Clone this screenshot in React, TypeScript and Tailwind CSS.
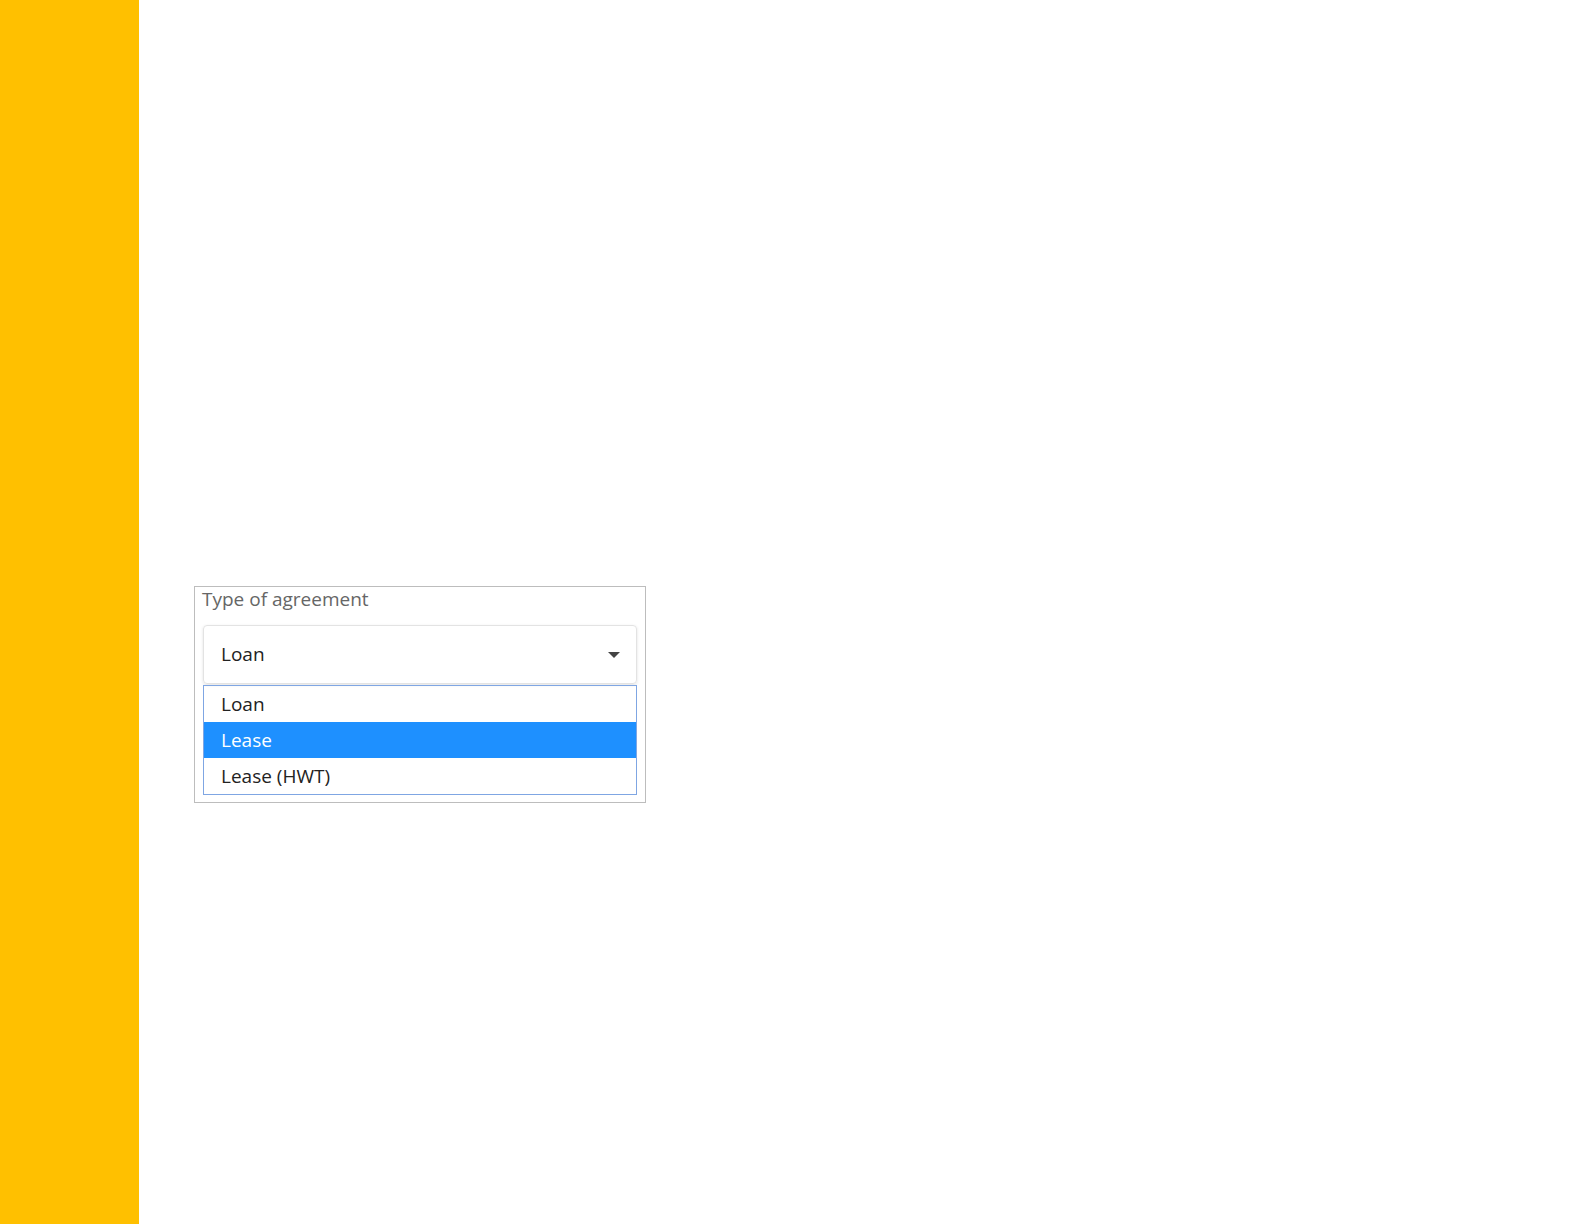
const options = ["Loan", "Lease", "Lease (HWT)"];

export default function App() {
  const selected = "Lease";

  return (
    <div className="flex h-[1224px] w-full bg-white font-['Open_Sans',sans-serif]">
      <aside className="h-full w-[139px] shrink-0 bg-[#ffc000]" />

      <main className="flex-1 pl-[55px] pt-[586px]">
        <div className="w-[452px] border border-[#bdbdbd] px-2 pb-[7px]">
          <p className="-ml-px text-[19px] leading-6 text-[#666]">Type of agreement</p>

          <div className="mt-[14px] flex h-[59px] items-center justify-between rounded-[4px] border border-[#e3e3e3] pl-[17px] pr-[15px] shadow-[0_1px_3px_rgba(0,0,0,0.12)]">
            <span className="text-[19px] text-[#222]">Loan</span>
            <svg width="12" height="6" viewBox="0 0 12 6" className="mr-[1px]">
              <path d="M0 0 L12 0 L6 6 Z" fill="#444" />
            </svg>
          </div>

          <ul className="mt-px border border-[#7fa6e3]">
            {options.map((option) => (
              <li
                key={option}
                className={
                  option === selected
                    ? "flex h-9 items-center bg-[#1e90ff] pl-[17px] text-[19px] text-white"
                    : "flex h-9 items-center pl-[17px] text-[19px] text-[#222]"
                }
              >
                {option}
              </li>
            ))}
          </ul>
        </div>
      </main>
    </div>
  );
}
